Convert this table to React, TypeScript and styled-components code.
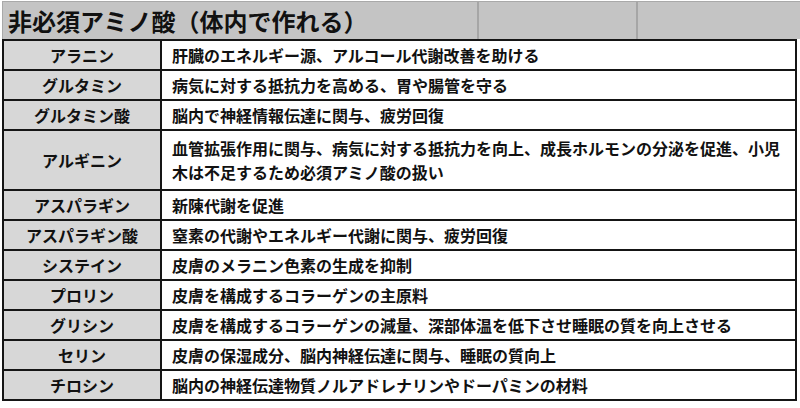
import { Fragment } from 'react';
import styled, { createGlobalStyle } from 'styled-components';

const GlobalStyle = createGlobalStyle`
  body {
    margin: 0;
    background: #ffffff;
    font-family: "Noto Sans CJK JP", "Noto Sans", sans-serif;
    color: #111111;
  }
`;

const Sheet = styled.div`
  width: 800px;
  height: 408px;
  overflow: hidden;
  background: #ffffff;
`;

const TitleBar = styled.div`
  display: grid;
  grid-template-columns: 476px 159px 1fr;
  height: 37px;
  margin-left: 2px;
  border-top: 1px solid #a9a9a9;
  border-left: 1px solid #a9a9a9;
  margin-top: 1px;
  background: #c4c4c4;
`;

const TitleCell = styled.div`
  border-right: 2px solid #a6a6a6;
  display: flex;
  align-items: center;
  &:last-child {
    border-right: none;
  }
`;

const Title = styled.h1`
  margin: 0;
  padding-left: 5px;
  font-size: 24px;
  font-weight: 700;
  line-height: 1;
  white-space: nowrap;
`;

const Table = styled.div`
  display: grid;
  grid-template-columns: 156px 1fr;
  gap: 2px;
  width: 791px;
  margin-left: 2px;
  background: #151515;
  border: 2px solid #151515;
`;

const NameCell = styled.div<{ tall?: boolean }>`
  background: #d7d7d7;
  height: ${({ tall }) => (tall ? 58 : 28)}px;
  display: flex;
  align-items: center;
  justify-content: center;
  font-size: 16px;
  font-weight: 700;
`;

const DescCell = styled.div<{ tall?: boolean }>`
  background: #ffffff;
  height: ${({ tall }) => (tall ? 58 : 28)}px;
  display: flex;
  align-items: center;
  padding: 0 8px 0 10px;
  font-size: 16px;
  font-weight: 700;
  line-height: 24px;
`;

const rows = [
  { name: 'アラニン', desc: '肝臓のエネルギー源、アルコール代謝改善を助ける' },
  { name: 'グルタミン', desc: '病気に対する抵抗力を高める、胃や腸管を守る' },
  { name: 'グルタミン酸', desc: '脳内で神経情報伝達に関与、疲労回復' },
  {
    name: 'アルギニン',
    desc: '血管拡張作用に関与、病気に対する抵抗力を向上、成長ホルモンの分泌を促進、小児木は不足するため必須アミノ酸の扱い',
    tall: true
  },
  { name: 'アスパラギン', desc: '新陳代謝を促進' },
  { name: 'アスパラギン酸', desc: '窒素の代謝やエネルギー代謝に関与、疲労回復' },
  { name: 'システイン', desc: '皮膚のメラニン色素の生成を抑制' },
  { name: 'プロリン', desc: '皮膚を構成するコラーゲンの主原料' },
  { name: 'グリシン', desc: '皮膚を構成するコラーゲンの減量、深部体温を低下させ睡眠の質を向上させる' },
  { name: 'セリン', desc: '皮膚の保湿成分、脳内神経伝達に関与、睡眠の質向上' },
  { name: 'チロシン', desc: '脳内の神経伝達物質ノルアドレナリンやドーパミンの材料' }
];

const App = () => {
  return (
    <Sheet>
      <GlobalStyle />
      <TitleBar>
        <TitleCell>
          <Title>非必須アミノ酸（体内で作れる）</Title>
        </TitleCell>
        <TitleCell />
        <TitleCell />
      </TitleBar>
      <Table>
        {rows.map((r) => (
          <Fragment key={r.name}>
            <NameCell tall={r.tall}>{r.name}</NameCell>
            <DescCell tall={r.tall}>{r.desc}</DescCell>
          </Fragment>
        ))}
      </Table>
    </Sheet>
  );
};

export default App;
